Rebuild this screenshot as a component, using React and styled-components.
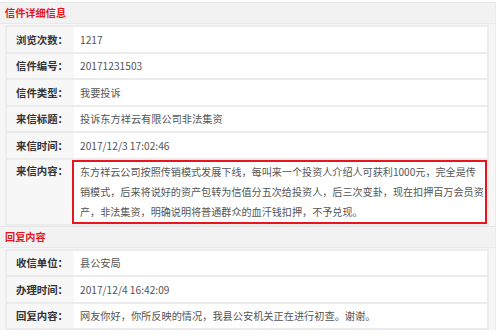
import React from 'react';
import styled, { createGlobalStyle } from 'styled-components';

const GlobalStyle = createGlobalStyle`
  body {
    margin: 0;
    background: #fff;
    font-family: "Microsoft YaHei", "Noto Sans CJK SC", sans-serif;
  }
`;

const Page = styled.div`
  width: 496px;
  padding-top: 2px;
`;

const Section = styled.div`
  background: #f6f6f6;
  border-right: 1px solid #ececec;
`;

const SectionHeader = styled.div`
  height: 20px;
  line-height: 20px;
  padding-left: 5px;
  background: #f2f2f2;
  border-top: 1px solid #e6e6e6;
  border-bottom: 1px solid #e9e9e9;
  color: #e4161c;
  font-weight: bold;
  font-size: 10.2px;
`;

const Table = styled.div`
  display: grid;
  grid-template-columns: 67px 1fr;
  gap: 2px 0;
  margin: 1px 6px 0 5px;
  padding: 2px;
  background: #ececec;
`;

const Label = styled.div`
  display: flex;
  align-items: ${(p) => (p.top ? 'flex-start' : 'center')};
  justify-content: flex-end;
  padding-right: 6px;
  padding-top: ${(p) => (p.top ? '3px' : '0')};
  min-height: ${(p) => (p.top ? '0' : '24.5px')};
  background: #f7f7f7;
  color: #333;
  font-weight: bold;
  font-size: 10.4px;
`;

const Value = styled.div`
  display: flex;
  align-items: center;
  padding-left: 6px;
  background: #fff;
  color: #555;
  font-size: 10.2px;
`;

const Highlight = styled.div`
  background: #fff;
  border: 2px solid #e8141e;
  margin-left: -2px;
  padding: 0 2px 0 6px;
  line-height: 20px;
  color: #555;
  font-size: 10.1px;
  white-space: nowrap;
  overflow: hidden;
`;

const letter = [
  ['浏览次数：', '1217'],
  ['信件编号：', '20171231503'],
  ['信件类型：', '我要投诉'],
  ['来信标题：', '投诉东方祥云有限公司非法集资'],
  ['来信时间：', '2017/12/3 17:02:46'],
];

const content = [
  '东方祥云公司按照传销模式发展下线，每叫来一个投资人介绍人可获利1000元，完全是传',
  '销模式，后来将说好的资产包转为信值分五次给投资人，后三次变卦，现在扣押百万会员资',
  '产，非法集资，明确说明将普通群众的血汗钱扣押，不予兑现。',
];

const reply = [
  ['收信单位：', '县公安局'],
  ['办理时间：', '2017/12/4 16:42:09'],
  ['回复内容：', '网友你好，你所反映的情况，我县公安机关正在进行初查。谢谢。'],
];

export default function App() {
  return (
    <Page>
      <GlobalStyle />
      <Section>
        <SectionHeader>信件详细信息</SectionHeader>
        <Table>
          {letter.map(([k, v]) => (
            <React.Fragment key={k}>
              <Label>{k}</Label>
              <Value>{v}</Value>
            </React.Fragment>
          ))}
          <Label top>来信内容：</Label>
          <Highlight>
            {content.map((line, i) => (
              <React.Fragment key={i}>
                {line}
                {i < content.length - 1 && <br />}
              </React.Fragment>
            ))}
          </Highlight>
        </Table>
        <SectionHeader>回复内容</SectionHeader>
        <Table>
          {reply.map(([k, v]) => (
            <React.Fragment key={k}>
              <Label>{k}</Label>
              <Value>{v}</Value>
            </React.Fragment>
          ))}
        </Table>
      </Section>
    </Page>
  );
}
